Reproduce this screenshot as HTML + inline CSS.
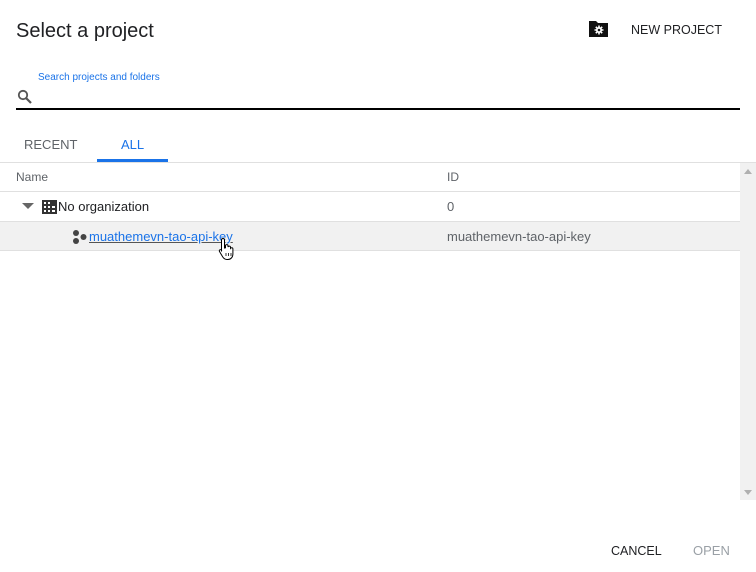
<!DOCTYPE html>
<html><head><meta charset="utf-8"><style>
*{margin:0;padding:0;box-sizing:border-box}
body{width:756px;height:572px;background:#fff;font-family:"Liberation Sans",Arial,sans-serif;position:relative;overflow:hidden;color:#202124}
.a{position:absolute}
</style></head><body>
<div class="a" style="left:16px;top:20px;font-size:20px;color:#202124">Select a project</div>
<svg class="a" style="left:588px;top:19px" width="22" height="20" viewBox="0 0 22 20"><path d="M1 2h7l2 2h10v14H1z" fill="#111"/><g stroke="#fff" stroke-width="1.6"><path d="M11 6.5v9M6.5 11h9M7.8 7.8l6.4 6.4M14.2 7.8l-6.4 6.4"/></g><circle cx="11" cy="11" r="3" fill="#fff"/><circle cx="11" cy="11" r="1.3" fill="#111"/></svg>
<div class="a" style="left:631px;top:23px;font-size:12.5px;color:#202124">NEW PROJECT</div>
<div class="a" style="left:38px;top:72px;font-size:10px;color:#1a73e8">Search projects and folders</div>
<svg class="a" style="left:17px;top:89px" width="16" height="16" viewBox="0 0 16 16"><circle cx="6" cy="6" r="4.2" fill="none" stroke="#555" stroke-width="1.8"/><path d="M9 9l5 5" stroke="#555" stroke-width="2.2"/></svg>
<div class="a" style="left:16px;top:108px;width:724px;height:2px;background:#000"></div>
<div class="a" style="left:24px;top:137px;font-size:13px;color:#5f6368">RECENT</div>
<div class="a" style="left:121px;top:137px;font-size:13px;color:#1a73e8">ALL</div>
<div class="a" style="left:97px;top:159px;width:71px;height:3px;background:#1a73e8"></div>
<div class="a" style="left:0;top:162px;width:756px;height:1px;background:#e0e0e0"></div>
<div class="a" style="left:740px;top:163px;width:16px;height:337px;background:#f1f1f1"></div>
<div class="a" style="left:744px;top:169px;width:0;height:0;border-left:4px solid transparent;border-right:4px solid transparent;border-bottom:5px solid #b0b0b0"></div>
<div class="a" style="left:744px;top:490px;width:0;height:0;border-left:4px solid transparent;border-right:4px solid transparent;border-top:5px solid #b0b0b0"></div>
<div class="a" style="left:16px;top:170px;font-size:12px;color:#5f6368">Name</div>
<div class="a" style="left:447px;top:170px;font-size:12px;color:#5f6368">ID</div>
<div class="a" style="left:0;top:191px;width:740px;height:1px;background:#e0e0e0"></div>
<div class="a" style="left:22px;top:203px;width:0;height:0;border-left:6px solid transparent;border-right:6px solid transparent;border-top:6px solid #666"></div>
<svg class="a" style="left:42px;top:200px" width="15" height="14" viewBox="0 0 15 14"><rect width="15" height="14" fill="#333"/><g fill="#fff"><rect x="2" y="2" width="2" height="2"/><rect x="6" y="2" width="2" height="2"/><rect x="2" y="6" width="2" height="2"/><rect x="6" y="6" width="2" height="2"/><rect x="2" y="10" width="2" height="2"/><rect x="6" y="10" width="2" height="2"/><rect x="10" y="6" width="3" height="2"/><rect x="10" y="10" width="3" height="2"/></g></svg>
<div class="a" style="left:58px;top:199px;font-size:13px;color:#202124">No organization</div>
<div class="a" style="left:447px;top:199px;font-size:13px;color:#5f6368">0</div>
<div class="a" style="left:0;top:221px;width:740px;height:30px;background:#f1f1f1;border-top:1px solid #e0e0e0;border-bottom:1px solid #e0e0e0"></div>
<svg class="a" style="left:72px;top:229px" width="16" height="16" viewBox="0 0 16 16"><circle cx="4" cy="4" r="3" fill="#444"/><circle cx="4" cy="12" r="3" fill="#444"/><circle cx="11.5" cy="8" r="3" fill="#444"/></svg>
<div class="a" style="left:89px;top:229px;font-size:13px;color:#1a73e8;text-decoration:underline;text-decoration-color:#555">muathemevn-tao-api-key</div>
<div class="a" style="left:447px;top:229px;font-size:13px;color:#5f6368">muathemevn-tao-api-key</div>
<svg class="a" style="left:218px;top:237px" width="18" height="24" viewBox="0 0 18 24"><path d="M5 1.5c1 0 1.5.6 1.5 1.5v8l1-.2v-2c0-.8.6-1.2 1.3-1.2s1.2.5 1.2 1.2v1.2c.3-.6.8-.9 1.3-.9.7 0 1.2.5 1.2 1.2v1c.3-.4.7-.6 1.2-.6.7 0 1.2.5 1.2 1.2V17c0 3-2 5.5-5 5.5H9c-2 0-3.3-1-4.3-2.6L1.5 14.5c-.4-.7-.2-1.4.4-1.7.6-.3 1.3-.1 1.7.5L3.5 14.5V3c0-.9.6-1.5 1.5-1.5z" fill="#fff" stroke="#000" stroke-width="1"/><path d="M8 16v3M10.5 16v3M13 16v3" stroke="#000" stroke-width=".8"/></svg>
<div class="a" style="left:611px;top:544px;font-size:12.5px;color:#202124">CANCEL</div>
<div class="a" style="left:693px;top:543px;font-size:13px;color:#9aa0a6">OPEN</div>
</body></html>
